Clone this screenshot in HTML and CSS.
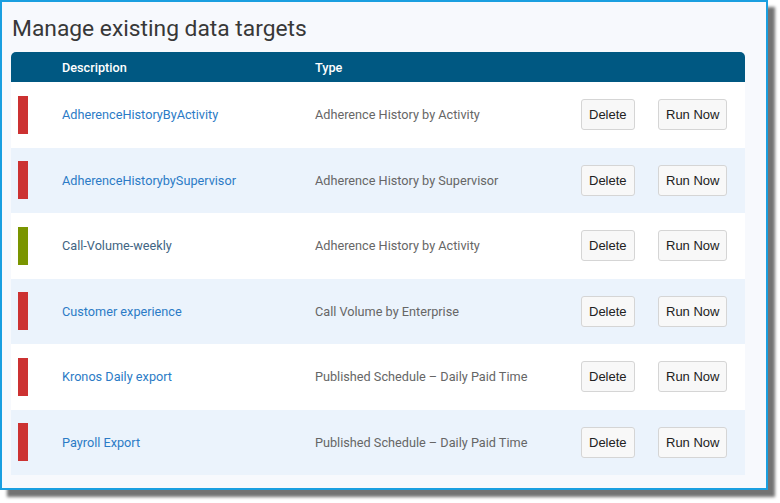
FILE: index.html
```html
<!DOCTYPE html>
<html lang="en">
<head>
    <meta charset="UTF-8">
    <title>Manage existing data targets</title>
    <link rel="stylesheet" href="styles.css">
</head>
<body>
    <div class="frame">
        <h1>Manage existing data targets</h1>

        <div class="targets">
            <div class="row head">
                <span></span>
                <span>Description</span>
                <span>Type</span>
                <span></span>
                <span></span>
            </div>

            <div class="row">
                <span class="flag red"></span>
                <a class="desc" href="#">AdherenceHistoryByActivity</a>
                <span class="type">Adherence History by Activity</span>
                <button>Delete</button>
                <button>Run Now</button>
            </div>
            <div class="row">
                <span class="flag red"></span>
                <a class="desc" href="#">AdherenceHistorybySupervisor</a>
                <span class="type">Adherence History by Supervisor</span>
                <button>Delete</button>
                <button>Run Now</button>
            </div>
            <div class="row">
                <span class="flag green"></span>
                <a class="desc dark" href="#">Call-Volume-weekly</a>
                <span class="type">Adherence History by Activity</span>
                <button>Delete</button>
                <button>Run Now</button>
            </div>
            <div class="row">
                <span class="flag red"></span>
                <a class="desc" href="#">Customer experience</a>
                <span class="type">Call Volume by Enterprise</span>
                <button>Delete</button>
                <button>Run Now</button>
            </div>
            <div class="row">
                <span class="flag red"></span>
                <a class="desc" href="#">Kronos Daily export</a>
                <span class="type">Published Schedule &ndash; Daily Paid Time</span>
                <button>Delete</button>
                <button>Run Now</button>
            </div>
            <div class="row">
                <span class="flag red"></span>
                <a class="desc" href="#">Payroll Export</a>
                <span class="type">Published Schedule &ndash; Daily Paid Time</span>
                <button>Delete</button>
                <button>Run Now</button>
            </div>
        </div>
    </div>
</body>
</html>
```

FILE: styles.css
```css
body {
    margin: 0;
    padding-bottom: 13px;
    background-color: #fff;
    font-family: Roboto, "Liberation Sans", sans-serif;
}
.frame {
    width: 755px;
    height: 486px;
    border: 2px solid #1a9fe0;
    background-color: #f7f9fd;
    box-shadow: 7px 7px 3px rgba(0, 0, 0, 0.55);
    padding: 0 0 0 9px;
}
h1 {
    margin: 0;
    padding: 13px 0 0 1px;
    height: 37px;
    font-size: 22.8px;
    font-weight: normal;
    color: #383838;
    line-height: 27px;
}
.targets {
    width: 734px;
}
.row {
    display: grid;
    grid-template-columns: 51px 253px 266px 77px auto;
    align-items: center;
    height: 65.5px;
    background-color: #fff;
    font-size: 12.7px;
}
.row:nth-child(odd) {
    background-color: #ebf3fc;
}
.row.head {
    height: 30px;
    background-color: #005882;
    color: #fff;
    font-weight: 500;
    border-radius: 5px 5px 0 0;
}
.flag {
    display: block;
    width: 10px;
    height: 38px;
    margin-left: 7px;
}
.red {
    background-color: #cc3232;
}
.green {
    background-color: #7a9500;
}
.desc {
    color: #2b7bc6;
    text-decoration: none;
}
.desc.dark {
    color: #3f6583;
}
.type {
    color: #666;
}
button {
    justify-self: start;
    height: 31px;
    padding: 0 7px;
    font-family: "Liberation Sans", Arial, sans-serif;
    font-size: 13px;
    color: #222;
    background-color: #f8f8f8;
    border: 1px solid #d5d5d5;
    border-radius: 3px;
}
```
